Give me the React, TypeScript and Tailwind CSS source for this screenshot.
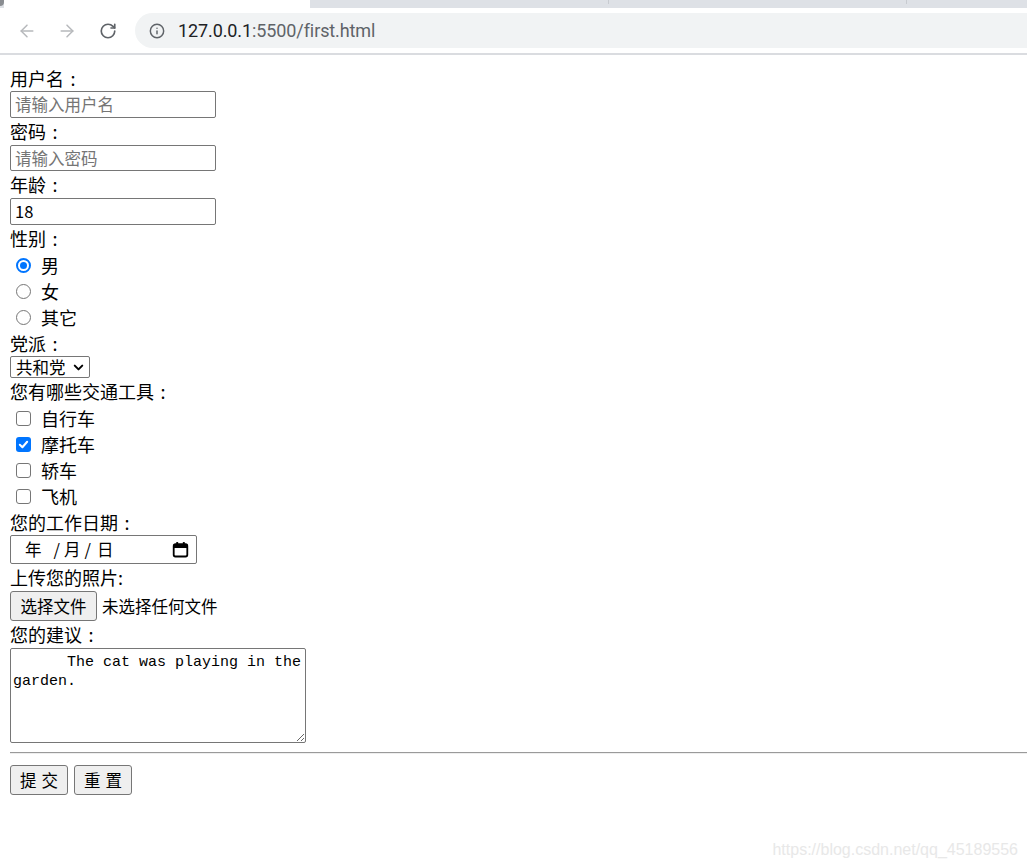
import React from 'react';
import { ArrowLeft, ArrowRight, RotateCw, Info, ChevronDown } from 'lucide-react';

const cjk = "font-['Noto_Sans_CJK_SC','Noto_Sans',sans-serif]";

function Radio({ checked }: { checked?: boolean }) {
    if (checked) {
        return (
            <span className="flex items-center justify-center w-[15px] h-[15px] rounded-full border-2 border-[#0075ff] bg-white">
                <span className="w-[7px] h-[7px] rounded-full bg-[#0075ff]" />
            </span>
        );
    }
    return <span className="w-[15px] h-[15px] rounded-full border border-[#767676] bg-white" />;
}

function Check({ checked }: { checked?: boolean }) {
    if (checked) {
        return (
            <span className="flex items-center justify-center w-[15px] h-[15px] rounded-[3px] bg-[#0075ff]">
                <svg width="11" height="11" viewBox="0 0 12 12">
                    <path d="M2 6.3 L4.8 9 L10 3" fill="none" stroke="white" strokeWidth="2.2" strokeLinecap="round" strokeLinejoin="round" />
                </svg>
            </span>
        );
    }
    return <span className="w-[15px] h-[15px] rounded-[3px] border border-[#767676] bg-white" />;
}

function Calendar() {
    return (
        <svg width="17" height="17" viewBox="0 0 16 16">
            <rect x="1.6" y="3" width="12.8" height="11.6" rx="1.6" fill="none" stroke="black" strokeWidth="1.7" />
            <rect x="1.6" y="3" width="12.8" height="3.6" fill="black" />
            <rect x="4" y="1" width="1.8" height="3" fill="black" />
            <rect x="10.2" y="1" width="1.8" height="3" fill="black" />
        </svg>
    );
}

function Linha({ h, children }: { h: string; children: React.ReactNode }) {
    // rádio / checkbox
    return <div className={`flex items-center gap-[10px] pl-[6px] text-[18px] ${h}`}>{children}</div>;
}

// rótulo com dois-pontos centralizado (como no YaHei)
function Rotulo({ texto, h }: { texto: string; h: string }) {
    return (
        <div className={`text-[18px] ${h}`}>
            {texto}
            <span className="inline-block w-[18px] text-center">:</span>
        </div>
    );
}

export default function App() {
    return (
        <div className={`relative min-h-[867px] bg-white text-black ${cjk}`}>
            {/* barra das abas */}
            <div className="flex h-[8px] bg-[#dee1e6]">
                <div className="w-[4px] h-[6px] bg-[#8a8d91] rounded-br-[4px]" />
                <div className="w-[306px] bg-white" />
                <div className="flex-1 flex">
                    <div className="w-[298px]" />
                    <div className="w-px h-[4px] bg-[#c8cbd0]" />
                    <div className="w-[297px]" />
                    <div className="w-px h-[4px] bg-[#c8cbd0]" />
                </div>
            </div>

            {/* barra de endereço */}
            <div className="flex items-center h-[45px] bg-white pl-[7px]">
                <div className="flex w-[40px] justify-center text-[#b7b9bc]"><ArrowLeft size={20} strokeWidth={1.8} /></div>
                <div className="flex w-[40px] justify-center text-[#b7b9bc]"><ArrowRight size={20} strokeWidth={1.8} /></div>
                <div className="flex w-[41px] justify-center text-[#5f6368]"><RotateCw size={18} strokeWidth={2.2} /></div>
                <div className="flex items-center flex-1 h-[35px] ml-[7px] pl-[14px] rounded-l-full bg-[#f1f3f4]">
                    <Info size={16} strokeWidth={2.2} className="text-[#5f6368]" />
                    <span className="ml-[13px] text-[18px] font-['Roboto',sans-serif] tracking-[-0.1px]">
                        <span className="text-[#202124]">127.0.0.1</span>
                        <span className="text-[#5f6368]">:5500/first.html</span>
                    </span>
                </div>
            </div>
            <div className="h-[2px] bg-[#dadce0]" />

            {/* formulário */}
            <form className="flex flex-col pl-[10px] pt-[10px]" onSubmit={(e) => e.preventDefault()}>
                <Rotulo texto="用户名" h="h-[26px] leading-[26px]" />
                <div className="flex items-center w-[206px] h-[27px] pl-[4px] border border-[#767676] rounded-[2px] text-[16.5px] text-[#757575]">请输入用户名</div>
                <Rotulo texto="密码" h="h-[27px] leading-[27px]" />
                <div className="flex items-center w-[206px] h-[26px] pl-[4px] border border-[#767676] rounded-[2px] text-[16.5px] text-[#757575]">请输入密码</div>
                <Rotulo texto="年龄" h="h-[27px] leading-[27px]" />
                <div className="flex items-center w-[206px] h-[27px] pl-[4px] border border-[#767676] rounded-[2px] text-[16.5px]">18</div>
                <Rotulo texto="性别" h="h-[27px] leading-[27px]" />
                <Linha h="h-[26px]"><Radio checked /><span>男</span></Linha>
                <Linha h="h-[26px]"><Radio /><span>女</span></Linha>
                <Linha h="h-[26px]"><Radio /><span>其它</span></Linha>
                <Rotulo texto="党派" h="h-[26px] leading-[26px]" />
                <div className="flex items-center w-[80px] h-[22px] pl-[5px] border border-[#767676] rounded-[2px] text-[16.5px]">
                    <span>共和党</span>
                    <ChevronDown size={15} strokeWidth={3.2} className="ml-[5px]" />
                </div>
                <Rotulo texto="您有哪些交通工具" h="h-[27px] leading-[27px]" />
                <Linha h="h-[26px]"><Check /><span>自行车</span></Linha>
                <Linha h="h-[26px]"><Check checked /><span>摩托车</span></Linha>
                <Linha h="h-[26px]"><Check /><span>轿车</span></Linha>
                <Linha h="h-[26px]"><Check /><span>飞机</span></Linha>
                <Rotulo texto="您的工作日期" h="h-[26px] leading-[26px]" />
                <div className="flex items-center w-[187px] h-[29px] pl-[14px] pr-[7px] border border-[#767676] rounded-[2px] text-[16.5px]">
                    <span>年</span>
                    <span className="ml-[12px]">/</span>
                    <span className="ml-[4px]">月</span>
                    <span className="ml-[4px]">/</span>
                    <span className="ml-[6px]">日</span>
                    <span className="ml-auto flex"><Calendar /></span>
                </div>
                <div className="h-[27px] leading-[27px] text-[18px]">上传您的照片:</div>
                <div className="flex items-center h-[30px] text-[16.5px]">
                    <div className="flex items-center h-[30px] px-[9.5px] border border-[#767676] rounded-[3px] bg-[#efefef]">选择文件</div>
                    <span className="ml-[5px]">未选择任何文件</span>
                </div>
                <Rotulo texto="您的建议" h="h-[27px] leading-[27px]" />
                <textarea
                    readOnly
                    defaultValue={"      The cat was playing in the garden."}
                    className="block w-[296px] h-[95px] px-[2px] pt-[4px] pb-[2px] border border-[#767676] rounded-[2px] font-['Liberation_Mono',monospace] text-[15px] leading-[19px] outline-none resize"
                />
                <div className="mt-[9px] h-[2px] border-t border-[#9a9a9a] border-b border-b-[#eeeeee]" />
                <div className="flex gap-[6px] mt-[11px] text-[16.5px]">
                    <div className="flex items-center gap-[5px] h-[30px] px-[9px] border border-[#767676] rounded-[3px] bg-[#efefef]">
                        <span>提</span><span>交</span>
                    </div>
                    <div className="flex items-center gap-[5px] h-[30px] px-[9px] border border-[#767676] rounded-[3px] bg-[#efefef]">
                        <span>重</span><span>置</span>
                    </div>
                </div>
            </form>

            {/* marca d'água */}
            <div className="absolute right-[9px] top-[838px] text-[16px] font-['Liberation_Sans',sans-serif] text-[#e8e8e8]">
                https://blog.csdn.net/qq_45189556
            </div>
        </div>
    );
}
